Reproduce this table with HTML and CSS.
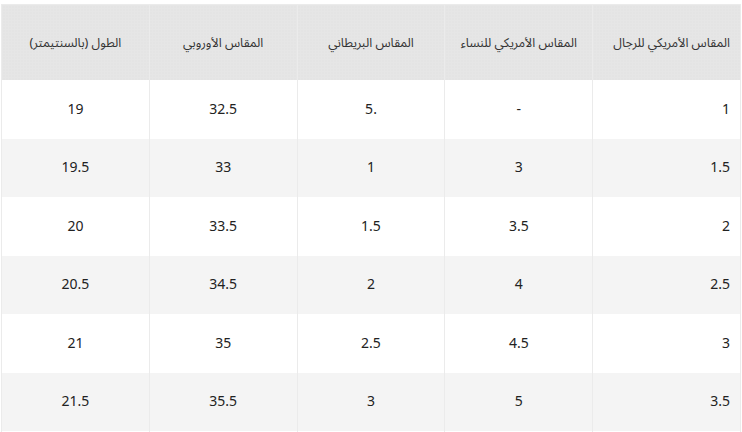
FILE: index.html
```html
<!DOCTYPE html>
<html lang="ar" dir="rtl">
<head>
<meta charset="utf-8">
<link rel="stylesheet" href="styles.css">
</head>
<body>
<div class="wrap">
<table class="size-table">
<thead>
<tr>
<th class="first">المقاس الأمريكي للرجال</th>
<th>المقاس الأمريكي للنساء</th>
<th>المقاس البريطاني</th>
<th>المقاس الأوروبي</th>
<th>الطول (بالسنتيمتر)</th>
</tr>
</thead>
<tbody>
<tr><td class="first">1</td><td>-</td><td>.5</td><td>32.5</td><td>19</td></tr>
<tr><td class="first">1.5</td><td>3</td><td>1</td><td>33</td><td>19.5</td></tr>
<tr><td class="first">2</td><td>3.5</td><td>1.5</td><td>33.5</td><td>20</td></tr>
<tr><td class="first">2.5</td><td>4</td><td>2</td><td>34.5</td><td>20.5</td></tr>
<tr><td class="first">3</td><td>4.5</td><td>2.5</td><td>35</td><td>21</td></tr>
<tr><td class="first">3.5</td><td>5</td><td>3</td><td>35.5</td><td>21.5</td></tr>
<tr><td class="first">4</td><td>5.5</td><td>3.5</td><td>36</td><td>22</td></tr>
</tbody>
</table>
</div>
</body>
</html>
```
FILE: styles.css
```css
html, body {
  margin: 0;
  padding: 0;
  background: #ffffff;
}
body {
  font-family: "Noto Sans Arabic", "Noto Sans", "DejaVu Sans", sans-serif;
  color: #222;
}
.wrap {
  padding-top: 4px;
  padding-right: 1px;
  direction: rtl;
}
.size-table {
  width: 740px;
  table-layout: fixed;
  border-collapse: collapse;
  border: 1px solid #ebebeb;
}
.size-table th,
.size-table td {
  border-left: 1px solid #ebebeb;
  border-right: 1px solid #ebebeb;
  text-align: center;
  padding: 0 10px;
  overflow: hidden;
  white-space: nowrap;
}
.size-table th {
  height: 75px;
  font-size: 12.5px;
  font-weight: normal;
  color: #333;
  background-color: #e6e6e6;
  background-image: radial-gradient(rgba(0,0,0,0.03) 0.6px, transparent 0.9px);
  background-size: 3px 3px;
}
.size-table td {
  height: 58.5px;
  font-size: 14px;
}
.size-table .first {
  text-align: right;
}
.size-table tbody tr:nth-child(even) td {
  background: #f4f4f4;
}
```
